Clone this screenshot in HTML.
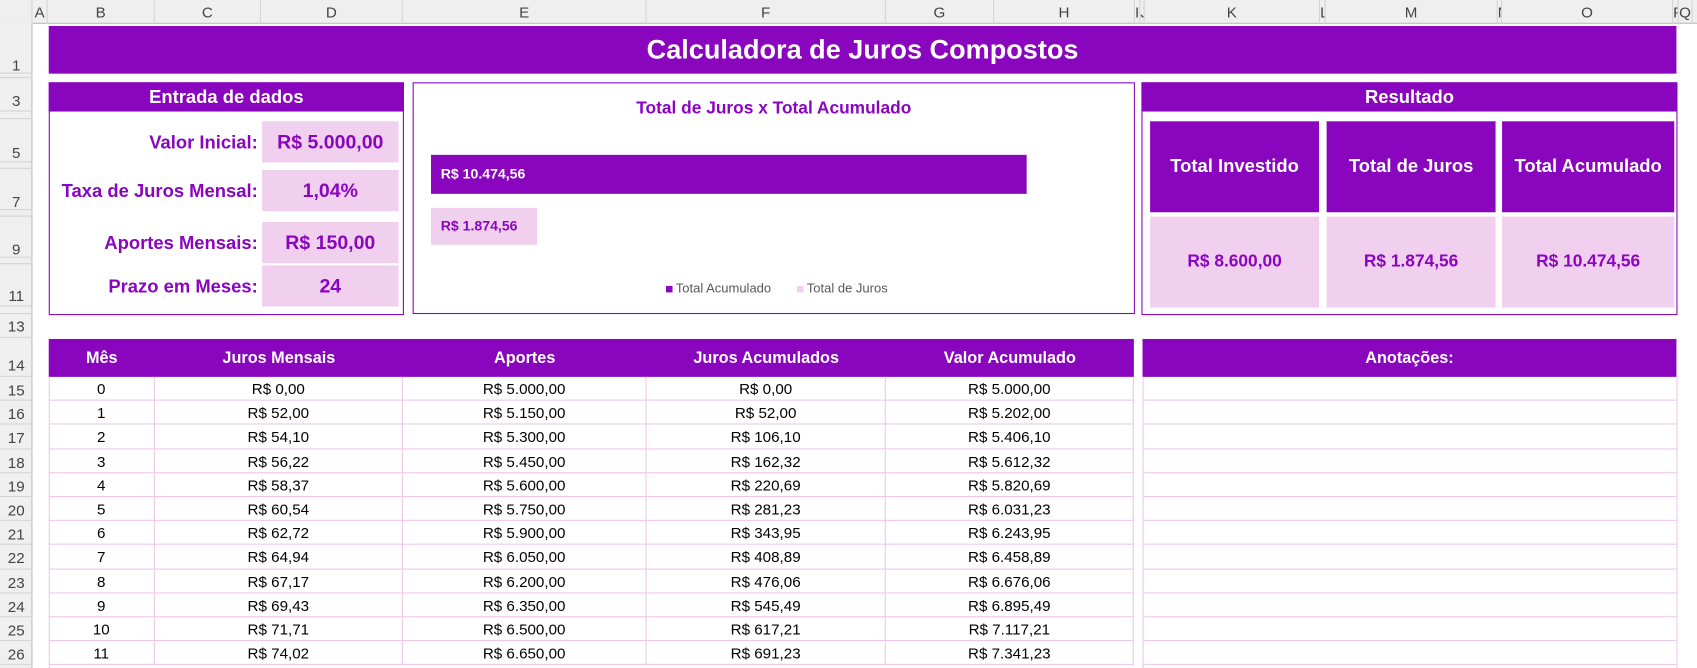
<!DOCTYPE html>
<html><head><meta charset="utf-8"><style>
*{margin:0;padding:0;box-sizing:border-box}
html,body{width:1697px;height:668px;overflow:hidden;background:#fff}
#o{position:relative;width:1697px;height:668px;overflow:hidden}
#w{position:absolute;left:0;top:0;width:1567px;height:617px;overflow:hidden;transform:scale(1.08296);transform-origin:0 0;font-family:"Liberation Sans",Arial,sans-serif}
.a{position:absolute}
.ch{position:absolute;top:0;height:22px;border-right:1px solid #d4d4d4;color:#444;font-size:14px;text-align:center;line-height:22px;overflow:hidden}
.rh{position:absolute;left:0;width:30px;border-bottom:1px solid #d4d4d4;color:#444;font-size:14px;text-align:center;overflow:hidden}
.P{background:#8a05be}
.K{background:#f1cfee}
.c{display:flex;align-items:center;justify-content:center;font-weight:bold}
.lbl{position:absolute;right:0;text-align:right;font-weight:bold;color:#8a05be;font-size:17px;white-space:nowrap}
.tr{position:absolute;left:45px;height:22.2px;font-size:14px;color:#000}
.tr div{position:absolute;top:0;height:22.2px;line-height:22px;text-align:center;border-right:1px solid #f0c6ec;border-bottom:1px solid #f0c6ec}
</style></head><body><div id="o"><div id="w">
<div class="a" style="left:0;top:0;width:1567px;height:22px;background:#efefef;border-bottom:1px solid #bdbdbd"></div>
<div class="a" style="left:0;top:0;width:30px;height:22px;background:#efefef;border-right:1px solid #d4d4d4"></div>
<div class="ch" style="left:30px;width:14px">A</div>
<div class="ch" style="left:44px;width:99px">B</div>
<div class="ch" style="left:143px;width:98px">C</div>
<div class="ch" style="left:241px;width:131px">D</div>
<div class="ch" style="left:372px;width:225px">E</div>
<div class="ch" style="left:597px;width:221px">F</div>
<div class="ch" style="left:818px;width:100px">G</div>
<div class="ch" style="left:918px;width:130px">H</div>
<div class="ch" style="left:1048px;width:5px">I</div>
<div class="ch" style="left:1053px;width:4px">J</div>
<div class="ch" style="left:1057px;width:162px">K</div>
<div class="ch" style="left:1219px;width:5px">L</div>
<div class="ch" style="left:1224px;width:159px">M</div>
<div class="ch" style="left:1383px;width:4px">N</div>
<div class="ch" style="left:1387px;width:158px">O</div>
<div class="ch" style="left:1545px;width:5px">P</div>
<div class="ch" style="left:1550px;width:13px">Q</div>
<div class="a" style="left:0;top:22px;width:30px;height:600px;background:#efefef;border-right:1px solid #bdbdbd"></div>
<div class="rh" style="top:22px;height:46px;line-height:76px">1</div>
<div class="rh" style="top:68px;height:4px"></div>
<div class="rh" style="top:72px;height:31px;line-height:42px">3</div>
<div class="rh" style="top:103px;height:7px"></div>
<div class="rh" style="top:110px;height:40px;line-height:62px">5</div>
<div class="rh" style="top:150px;height:6px"></div>
<div class="rh" style="top:156px;height:38px;line-height:60px">7</div>
<div class="rh" style="top:194px;height:6px"></div>
<div class="rh" style="top:200px;height:38px;line-height:60px">9</div>
<div class="rh" style="top:238px;height:6px"></div>
<div class="rh" style="top:244px;height:39px;line-height:58px">11</div>
<div class="rh" style="top:283px;height:7px"></div>
<div class="rh" style="top:290px;height:22px;line-height:22px">13</div>
<div class="rh" style="top:312px;height:36px;line-height:50px">14</div>
<div class="rh" style="top:348px;height:22.2px;line-height:24px">15</div>
<div class="rh" style="top:370.2px;height:22.2px;line-height:24px">16</div>
<div class="rh" style="top:392.4px;height:22.2px;line-height:24px">17</div>
<div class="rh" style="top:414.6px;height:22.2px;line-height:24px">18</div>
<div class="rh" style="top:436.8px;height:22.2px;line-height:24px">19</div>
<div class="rh" style="top:459px;height:22.2px;line-height:24px">20</div>
<div class="rh" style="top:481.2px;height:22.2px;line-height:24px">21</div>
<div class="rh" style="top:503.4px;height:22.2px;line-height:24px">22</div>
<div class="rh" style="top:525.6px;height:22.2px;line-height:24px">23</div>
<div class="rh" style="top:547.8px;height:22.2px;line-height:24px">24</div>
<div class="rh" style="top:570px;height:22.2px;line-height:24px">25</div>
<div class="rh" style="top:592.2px;height:22.2px;line-height:24px">26</div>
<div class="rh" style="top:614.4px;height:22.2px"></div>

<div class="a P c" style="left:45px;top:24px;width:1503px;height:44px;color:#fff;font-size:25px">Calculadora de Juros Compostos</div>

<div class="a" style="left:45px;top:76px;width:328px;height:215px;border:1px solid #8a05be"></div>
<div class="a P c" style="left:45px;top:76px;width:328px;height:27px;color:#fff;font-size:17px">Entrada de dados</div>
<div class="a" style="left:45px;top:112px;width:193px;height:38px"><div class="lbl" style="top:10px">Valor Inicial:</div></div>
<div class="a" style="left:45px;top:157px;width:193px;height:38px"><div class="lbl" style="top:10px">Taxa de Juros Mensal:</div></div>
<div class="a" style="left:45px;top:205px;width:193px;height:38px"><div class="lbl" style="top:10px">Aportes Mensais:</div></div>
<div class="a" style="left:45px;top:245px;width:193px;height:38px"><div class="lbl" style="top:10px">Prazo em Meses:</div></div>
<div class="a K c" style="left:242px;top:112px;width:126px;height:38px;color:#8a05be;font-size:18px">R$ 5.000,00</div>
<div class="a K c" style="left:242px;top:157px;width:126px;height:38px;color:#8a05be;font-size:18px">1,04%</div>
<div class="a K c" style="left:242px;top:205px;width:126px;height:38px;color:#8a05be;font-size:18px">R$ 150,00</div>
<div class="a K c" style="left:242px;top:245px;width:126px;height:38px;color:#8a05be;font-size:18px">24</div>

<div class="a" style="left:381px;top:76px;width:667px;height:214px;border:1px solid #8a05be"></div>
<div class="a c" style="left:381px;top:90px;width:667px;height:22px;color:#8a05be;font-size:16px">Total de Juros x Total Acumulado</div>
<div class="a P" style="left:398px;top:143px;width:550px;height:36px;color:#fff;font-weight:bold;font-size:13px;line-height:36px;padding-left:9px">R$ 10.474,56</div>
<div class="a K" style="left:398px;top:192px;width:98px;height:34px;color:#8a05be;font-weight:bold;font-size:13px;line-height:34px;padding-left:9px">R$ 1.874,56</div>
<div class="a P" style="left:615px;top:264px;width:6px;height:6px"></div>
<div class="a" style="left:624px;top:259px;font-size:12px;color:#595959">Total Acumulado</div>
<div class="a K" style="left:736px;top:264px;width:6px;height:6px"></div>
<div class="a" style="left:745px;top:259px;font-size:12px;color:#595959">Total de Juros</div>

<div class="a" style="left:1054px;top:76px;width:495px;height:215px;border:1px solid #8a05be"></div>
<div class="a P c" style="left:1054px;top:76px;width:495px;height:27px;color:#fff;font-size:17px">Resultado</div>
<div class="a P c" style="left:1062px;top:112px;width:156px;height:84px;color:#fff;font-size:17px">Total Investido</div>
<div class="a P c" style="left:1225px;top:112px;width:156px;height:84px;color:#fff;font-size:17px">Total de Juros</div>
<div class="a P c" style="left:1387px;top:112px;width:159px;height:84px;color:#fff;font-size:17px">Total Acumulado</div>
<div class="a K c" style="left:1062px;top:200px;width:156px;height:84px;color:#8a05be;font-size:16px">R$ 8.600,00</div>
<div class="a K c" style="left:1225px;top:200px;width:156px;height:84px;color:#8a05be;font-size:16px">R$ 1.874,56</div>
<div class="a K c" style="left:1387px;top:200px;width:159px;height:84px;color:#8a05be;font-size:16px">R$ 10.474,56</div>

<div class="a P" style="left:45px;top:313px;width:1002px;height:35px;color:#fff;font-weight:bold;font-size:15px">
<div class="a c" style="left:0;width:98px;height:35px">Mês</div>
<div class="a c" style="left:98px;width:229px;height:35px">Juros Mensais</div>
<div class="a c" style="left:327px;width:225px;height:35px">Aportes</div>
<div class="a c" style="left:552px;width:221px;height:35px">Juros Acumulados</div>
<div class="a c" style="left:773px;width:229px;height:35px">Valor Acumulado</div>
</div>
<div class="a P c" style="left:1055px;top:313px;width:493px;height:35px;color:#fff;font-size:15px">Anotações:</div>
<div class="a" style="left:45px;top:348px;width:1px;height:270px;background:#f0c6ec"></div>
<div class="a" style="left:1055px;top:348px;width:1px;height:270px;background:#f0c6ec"></div>
<div class="a" style="left:1548px;top:348px;width:1px;height:270px;background:#f0c6ec"></div>

<div class="tr" style="top:348px"><div style="left:0;width:98px">0</div><div style="left:98px;width:229px">R$ 0,00</div><div style="left:327px;width:225px">R$ 5.000,00</div><div style="left:552px;width:221px">R$ 0,00</div><div style="left:773px;width:229px">R$ 5.000,00</div><div style="left:1010px;width:493px;border-right:none"></div></div>
<div class="tr" style="top:370.2px"><div style="left:0;width:98px">1</div><div style="left:98px;width:229px">R$ 52,00</div><div style="left:327px;width:225px">R$ 5.150,00</div><div style="left:552px;width:221px">R$ 52,00</div><div style="left:773px;width:229px">R$ 5.202,00</div><div style="left:1010px;width:493px;border-right:none"></div></div>
<div class="tr" style="top:392.4px"><div style="left:0;width:98px">2</div><div style="left:98px;width:229px">R$ 54,10</div><div style="left:327px;width:225px">R$ 5.300,00</div><div style="left:552px;width:221px">R$ 106,10</div><div style="left:773px;width:229px">R$ 5.406,10</div><div style="left:1010px;width:493px;border-right:none"></div></div>
<div class="tr" style="top:414.6px"><div style="left:0;width:98px">3</div><div style="left:98px;width:229px">R$ 56,22</div><div style="left:327px;width:225px">R$ 5.450,00</div><div style="left:552px;width:221px">R$ 162,32</div><div style="left:773px;width:229px">R$ 5.612,32</div><div style="left:1010px;width:493px;border-right:none"></div></div>
<div class="tr" style="top:436.8px"><div style="left:0;width:98px">4</div><div style="left:98px;width:229px">R$ 58,37</div><div style="left:327px;width:225px">R$ 5.600,00</div><div style="left:552px;width:221px">R$ 220,69</div><div style="left:773px;width:229px">R$ 5.820,69</div><div style="left:1010px;width:493px;border-right:none"></div></div>
<div class="tr" style="top:459px"><div style="left:0;width:98px">5</div><div style="left:98px;width:229px">R$ 60,54</div><div style="left:327px;width:225px">R$ 5.750,00</div><div style="left:552px;width:221px">R$ 281,23</div><div style="left:773px;width:229px">R$ 6.031,23</div><div style="left:1010px;width:493px;border-right:none"></div></div>
<div class="tr" style="top:481.2px"><div style="left:0;width:98px">6</div><div style="left:98px;width:229px">R$ 62,72</div><div style="left:327px;width:225px">R$ 5.900,00</div><div style="left:552px;width:221px">R$ 343,95</div><div style="left:773px;width:229px">R$ 6.243,95</div><div style="left:1010px;width:493px;border-right:none"></div></div>
<div class="tr" style="top:503.4px"><div style="left:0;width:98px">7</div><div style="left:98px;width:229px">R$ 64,94</div><div style="left:327px;width:225px">R$ 6.050,00</div><div style="left:552px;width:221px">R$ 408,89</div><div style="left:773px;width:229px">R$ 6.458,89</div><div style="left:1010px;width:493px;border-right:none"></div></div>
<div class="tr" style="top:525.6px"><div style="left:0;width:98px">8</div><div style="left:98px;width:229px">R$ 67,17</div><div style="left:327px;width:225px">R$ 6.200,00</div><div style="left:552px;width:221px">R$ 476,06</div><div style="left:773px;width:229px">R$ 6.676,06</div><div style="left:1010px;width:493px;border-right:none"></div></div>
<div class="tr" style="top:547.8px"><div style="left:0;width:98px">9</div><div style="left:98px;width:229px">R$ 69,43</div><div style="left:327px;width:225px">R$ 6.350,00</div><div style="left:552px;width:221px">R$ 545,49</div><div style="left:773px;width:229px">R$ 6.895,49</div><div style="left:1010px;width:493px;border-right:none"></div></div>
<div class="tr" style="top:570px"><div style="left:0;width:98px">10</div><div style="left:98px;width:229px">R$ 71,71</div><div style="left:327px;width:225px">R$ 6.500,00</div><div style="left:552px;width:221px">R$ 617,21</div><div style="left:773px;width:229px">R$ 7.117,21</div><div style="left:1010px;width:493px;border-right:none"></div></div>
<div class="tr" style="top:592.2px"><div style="left:0;width:98px">11</div><div style="left:98px;width:229px">R$ 74,02</div><div style="left:327px;width:225px">R$ 6.650,00</div><div style="left:552px;width:221px">R$ 691,23</div><div style="left:773px;width:229px">R$ 7.341,23</div><div style="left:1010px;width:493px;border-right:none"></div></div>
</div></div></body></html>
